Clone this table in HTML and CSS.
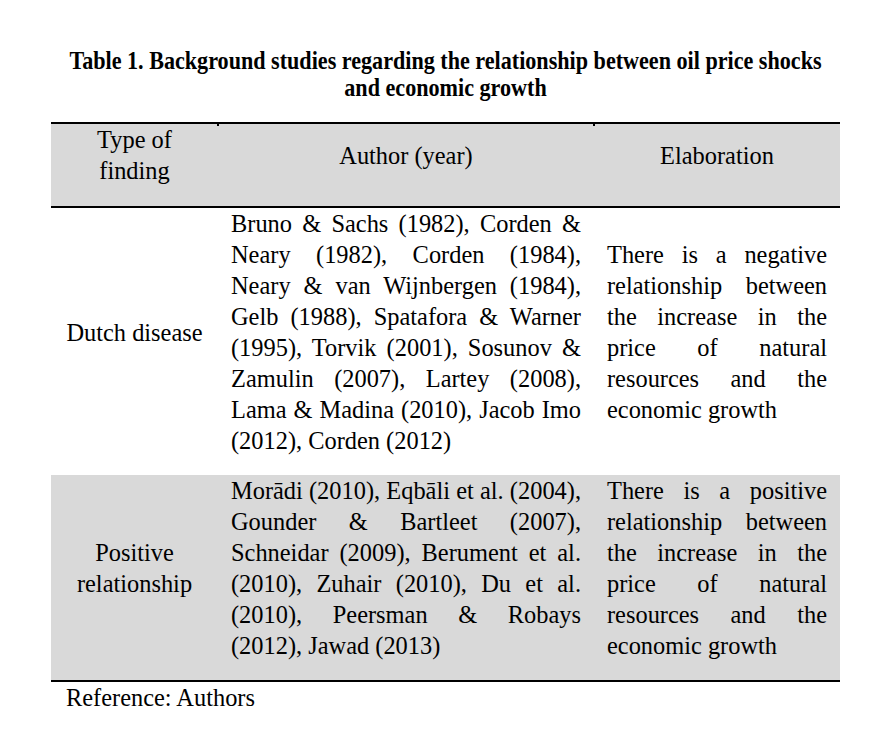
FILE: index.html
```html
<!DOCTYPE html>
<html lang="en">
<head>
<meta charset="utf-8">
<title>Table 1</title>
<link rel="stylesheet" href="styles.css">
</head>
<body>
<main class="page">
  <h1 class="title">Table 1. Background studies regarding the relationship between oil price shocks<br>and economic growth</h1>
  <table class="studies">
    <colgroup>
      <col class="c-type">
      <col class="c-author">
      <col class="c-elab">
    </colgroup>
    <thead>
      <tr>
        <th>Type of<br>finding</th>
        <th class="tick">Author (year)</th>
        <th class="tick">Elaboration</th>
      </tr>
    </thead>
    <tbody>
      <tr class="row-white">
        <td class="type">Dutch disease</td>
        <td class="just">
          <span class="ln">Bruno &amp; Sachs (1982), Corden &amp;</span>
          <span class="ln">Neary (1982), Corden (1984),</span>
          <span class="ln">Neary &amp; van Wijnbergen (1984),</span>
          <span class="ln">Gelb (1988), Spatafora &amp; Warner</span>
          <span class="ln">(1995), Torvik (2001), Sosunov &amp;</span>
          <span class="ln">Zamulin (2007), Lartey (2008),</span>
          <span class="ln">Lama &amp; Madina (2010), Jacob Imo</span>
          <span class="ln last">(2012), Corden (2012)</span>
        </td>
        <td class="just">
          <span class="ln">There is a negative</span>
          <span class="ln">relationship between</span>
          <span class="ln">the increase in the</span>
          <span class="ln">price of natural</span>
          <span class="ln">resources and the</span>
          <span class="ln last">economic growth</span>
        </td>
      </tr>
      <tr class="row-grey">
        <td class="type">Positive<br>relationship</td>
        <td class="just">
          <span class="ln">Morādi (2010), Eqbāli et al. (2004),</span>
          <span class="ln">Gounder &amp; Bartleet (2007),</span>
          <span class="ln">Schneidar (2009), Berument et al.</span>
          <span class="ln">(2010), Zuhair (2010), Du et al.</span>
          <span class="ln">(2010), Peersman &amp; Robays</span>
          <span class="ln last">(2012), Jawad (2013)</span>
        </td>
        <td class="just">
          <span class="ln">There is a positive</span>
          <span class="ln">relationship between</span>
          <span class="ln">the increase in the</span>
          <span class="ln">price of natural</span>
          <span class="ln">resources and the</span>
          <span class="ln last">economic growth</span>
        </td>
      </tr>
    </tbody>
  </table>
  <p class="source">Reference: Authors</p>
</main>
</body>
</html>
```
FILE: styles.css
```css
html, body {
  margin: 0;
  padding: 0;
  background: #ffffff;
}

body {
  font-family: "Liberation Serif", "Times New Roman", serif;
  color: #000000;
}

.page {
  width: 789px;
  margin-left: 51px;
  padding-top: 47px;
}

.title {
  margin: 0 -40px 21px;
  font-size: 25px;
  line-height: 27px;
  font-weight: bold;
  text-align: center;
  white-space: nowrap;
  transform: scaleX(0.885);
}

.studies {
  width: 789px;
  border-collapse: separate;
  border-spacing: 0;
  table-layout: fixed;
  font-family: "Liberation Serif", "Times New Roman", serif;
  font-size: 24.4px;
  line-height: 31px;
}

.c-type { width: 167px; }
.c-author { width: 376px; }
.c-elab { width: 246px; }

.studies th,
.studies td {
  padding: 0 13px 19px;
  vertical-align: middle;
}

.studies th {
  font-weight: normal;
  text-align: center;
  background: #d9d9d9;
  border-top: 2px solid #000000;
  border-bottom: 2px solid #000000;
  padding-bottom: 20px;
  position: relative;
}

.studies th.tick::before {
  content: "";
  position: absolute;
  left: -1px;
  top: 0;
  width: 2px;
  height: 2px;
  background: #000000;
}

.studies td.type {
  text-align: center;
}

.row-grey td {
  background: #d9d9d9;
  border-bottom: 2px solid #000000;
}

.just .ln {
  display: block;
  white-space: nowrap;
  text-align: justify;
  text-align-last: justify;
}

.just .ln.last {
  text-align: left;
  text-align-last: left;
}

.source {
  margin: 0 0 0 15px;
  font-size: 24.4px;
  line-height: 31px;
}
```
